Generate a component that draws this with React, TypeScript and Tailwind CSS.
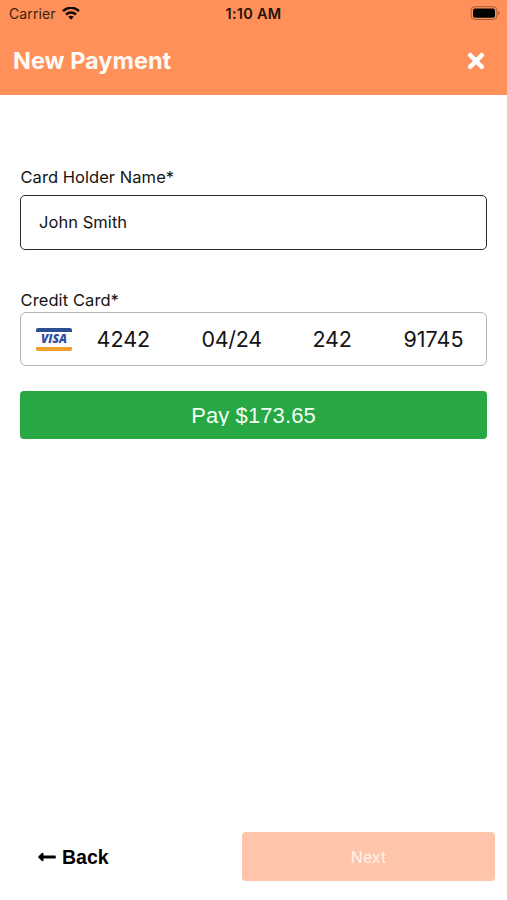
import { FaLongArrowAltLeft, FaTimes } from "react-icons/fa";

function WifiIcon() {
  return (
    <svg viewBox="0 0 18 14" className="h-[14px] w-[18px]" fill="none" stroke="#160b06" strokeWidth="2.5">
      <path d="M1 4.2C5.4 -.3 12.6 -.3 17 4.2" />
      <path d="M4 7.5c2.8-2.8 7.2-2.8 10 0" />
      <path d="M6.2 9.8c1.6-1.5 4-1.5 5.6 0L9 12.7Z" fill="#160b06" stroke="none" />
    </svg>
  );
}

function BatteryIcon() {
  return (
    <svg viewBox="0 0 30 14" className="h-[14px] w-[30px] overflow-visible">
      <rect x="0.1" y="-0.3" width="25.8" height="12.8" rx="3.6" fill="none" stroke="#a55c38" strokeWidth="1" />
      <rect x="2" y="1.5" width="22" height="9.2" rx="2" fill="#000" />
      <path d="M27.1 4.1c2 .7 2 3.3 0 4Z" fill="#a55c38" />
    </svg>
  );
}

function VisaMark() {
  return (
    <div className="flex h-[23px] w-[36px] flex-col justify-between rounded-[2px] bg-[#fbfbfd]">
      <div className="h-1 rounded-t-[2px] bg-[#2c4f93]" />
      <svg viewBox="0 0 36 15" className="h-[15px] w-[36px] overflow-visible">
        <text x="5" y="11.3" textLength="26" lengthAdjust="spacingAndGlyphs" fontFamily="Open Sans, sans-serif" fontSize="11.5" fontWeight="800" fontStyle="italic" fill="#2f4f9d">VISA</text>
      </svg>
      <div className="h-1 rounded-b-[2px] bg-[#f0a02c]" />
    </div>
  );
}

export default function App() {
  return (
    <div className="flex h-[900px] w-[507px] flex-col bg-white font-['Inter',sans-serif] text-[#141414]">
      <header className="h-[95px] bg-[#ff9059]">
        <div className="grid h-[27px] grid-cols-3 items-center pl-[9px] pr-[6px]">
          <div className="flex items-center gap-1.5">
            <span className="text-[14px] tracking-[0.1px] text-[#3a1f12]">Carrier</span>
            <WifiIcon />
          </div>
          <span className="-translate-x-[1.5px] text-center text-[14.5px] font-semibold tracking-[0.25px] text-[#25130a]">1:10 AM</span>
          <div className="flex justify-end">
            <BatteryIcon />
          </div>
        </div>
        <div className="flex h-[68px] items-center justify-between pl-[13px] pr-[19px]">
          <h1 className="text-[23.5px] font-bold text-[#fffaf5]">New Payment</h1>
          <FaTimes className="size-6 text-white" />
        </div>
      </header>

      <main className="flex flex-1 flex-col px-5 pt-[71px]">
        <label className="h-[29px] pl-[0.5px] text-[16.5px] leading-[22px] tracking-[0.05px]">Card Holder Name*</label>
        <div className="flex h-[55px] items-center rounded-[5px] border border-[#2b2b2b] pl-[18px] text-[16.5px] leading-[20px] tracking-[0.05px]">
          <span className="pb-px">John Smith</span>
        </div>
        <label className="mt-[39px] h-[23px] pl-[0.5px] text-[16.5px] leading-[22px] tracking-[0.09px]">Credit Card*</label>
        <div className="flex h-[54px] items-center rounded-[6px] border border-[#b5b5b5] pl-[15px] text-[21.5px]">
          <VisaMark />
          <span className="ml-[24.5px] w-[105px] pt-px">4242</span>
          <span className="w-[111px] pt-px tracking-[-0.3px]">04/24</span>
          <span className="w-[91px] pt-px tracking-[-0.2px]">242</span>
          <span className="pt-px">91745</span>
        </div>
        <button className="mt-[25px] flex h-[48px] items-center justify-center rounded-[4px] bg-[#28a745]">
          <span className="h-[22px] overflow-hidden font-['Liberation_Sans',sans-serif] text-[22px] leading-[24px] tracking-[0.1px] text-[#f2fff3]">Pay $173.65</span>
        </button>
      </main>

      <footer className="flex h-[68px] justify-between pl-[37px] pr-[12px]">
        <button className="flex h-[49px] items-center gap-[5px] text-black">
          <FaLongArrowAltLeft className="size-5" />
          <span className="pt-[2px] font-['Liberation_Sans',sans-serif] text-[19.5px] font-bold">Back</span>
        </button>
        <button className="h-[49px] w-[253px] rounded-[4px] bg-[#ffc5ab] text-[16px] text-[#fff2e9]">Next</button>
      </footer>
    </div>
  );
}
